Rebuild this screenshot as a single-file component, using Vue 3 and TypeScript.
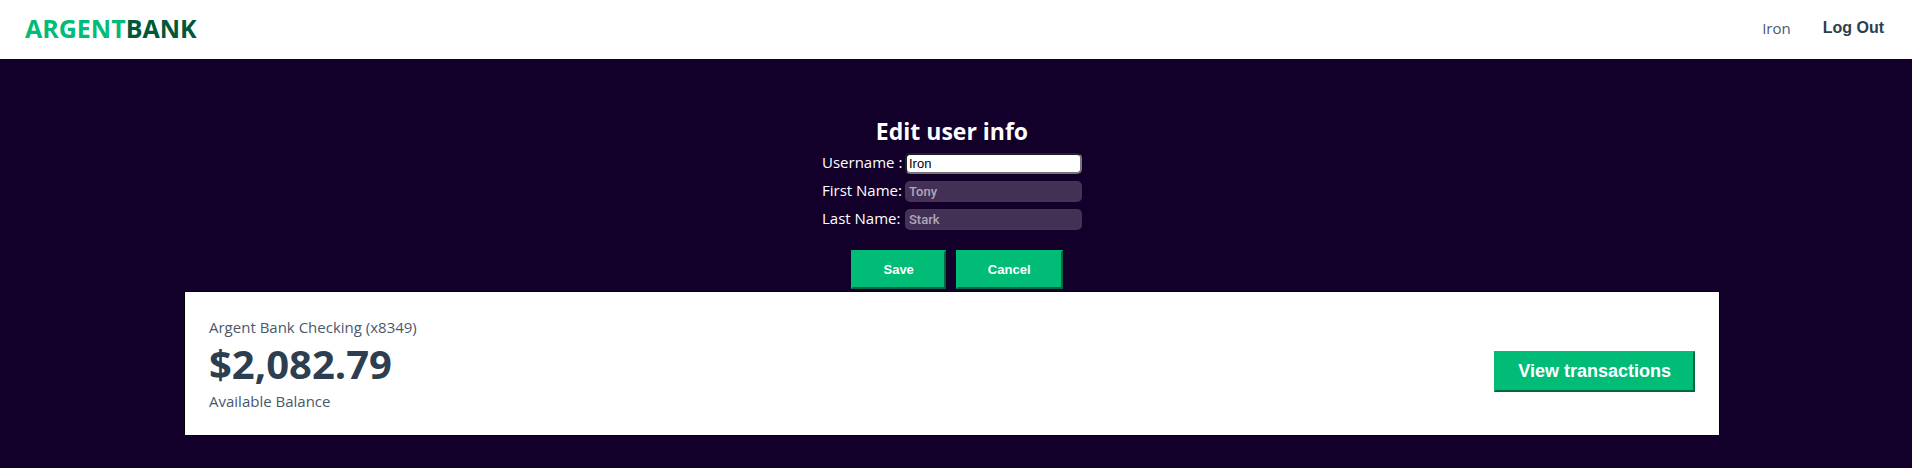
<script setup lang="ts">
import { ref } from 'vue'

const username = ref('Iron')
const firstName = ref('Tony')
const lastName = ref('Stark')
</script>

<template>
  <div class="page">
    <nav class="nav">
      <a class="logo" href="#"><span class="logo-light">ARGENT</span><span class="logo-dark">BANK</span></a>
      <div class="nav-links">
        <a class="nav-user" href="#">{{ username }}</a>
        <a class="nav-logout" href="#">Log Out</a>
      </div>
    </nav>

    <main class="main">
      <form class="edit" @submit.prevent>
        <h1 class="title">Edit user info</h1>
        <div class="field">
          <label for="username">Username :</label>
          <input id="username" v-model="username" type="text" />
        </div>
        <div class="field">
          <label for="first-name">First Name:</label>
          <input id="first-name" v-model="firstName" type="text" disabled />
        </div>
        <div class="field">
          <label for="last-name">Last Name:</label>
          <input id="last-name" v-model="lastName" type="text" disabled />
        </div>
        <div class="actions">
          <button class="button" type="submit">Save</button>
          <button class="button" type="button">Cancel</button>
        </div>
      </form>

      <section class="account">
        <div class="account-text">
          <h2 class="account-name">Argent Bank Checking (x8349)</h2>
          <p class="amount">$2,082.79</p>
          <p class="caption">Available Balance</p>
        </div>
        <button class="button view" type="button">View transactions</button>
      </section>
    </main>
  </div>
</template>

<style>
body {
  margin: 0;
  background: #12002b;
}
</style>

<style scoped>
.page {
  min-height: 100vh;
  font-family: 'Open Sans', 'Noto Sans', sans-serif;
  font-size: 15px;
  color: #2c3e50;
  background: #12002b;
}

.nav {
  display: flex;
  align-items: center;
  justify-content: space-between;
  box-sizing: border-box;
  height: 59px;
  padding: 0 28px 3px 25px;
  background: #fff;
}

.nav a {
  text-decoration: none;
}

.logo {
  font-size: 25px;
  font-weight: 700;
  line-height: 32px;
}

.logo-light {
  color: #00bc77;
}

.logo-dark {
  color: #00583a;
}

.nav-links {
  display: flex;
  align-items: center;
  gap: 32px;
  color: #2c3e50;
}

.nav a.nav-user {
  color: #4a596a;
}

.nav a.nav-logout {
  font-family: 'Liberation Sans', Arial, sans-serif;
  font-size: 16px;
  font-weight: 700;
  color: inherit;
}

.main {
  padding: 56px 192px 32px 184px;
}

.edit {
  display: flex;
  flex-direction: column;
  align-items: center;
}

.title {
  margin: 0 0 2px;
  font-size: 23px;
  font-weight: 700;
  line-height: 32px;
  color: #fff;
}

.field {
  display: flex;
  align-items: center;
  gap: 3px;
  height: 28px;
  color: #fff;
}

.field label {
  width: 80px;
  padding-bottom: 2px;
  white-space: nowrap;
}

.field input {
  box-sizing: border-box;
  width: 177px;
  height: 21px;
  padding: 1px 2px;
  border: 2px inset #767676;
  border-radius: 5px;
  font-family: 'Liberation Sans', Arial, sans-serif;
  font-size: 13px;
  color: #000;
  background: #fff;
}

.field input:disabled {
  border-color: #453357;
  border-style: solid;
  font-family: Roboto, sans-serif;
  font-weight: 500;
  color: #b1a6bb;
  background: #433054;
}

.actions {
  display: flex;
  gap: 10px;
  margin-top: 17px;
  margin-left: 10px;
}

.button {
  padding: 10px 30px;
  border: 2px outset #00bc77;
  font-family: 'Liberation Sans', Arial, sans-serif;
  font-size: 13px;
  font-weight: 700;
  line-height: 15px;
  color: #fff;
  background: #00bc77;
}

.account {
  display: flex;
  align-items: center;
  justify-content: space-between;
  margin-top: 2px;
  padding: 23px 24px 22px;
  border: 1px solid #000;
  background: #fff;
}

.account-name,
.caption {
  margin: 0;
  font-size: 15px;
  font-weight: 400;
  line-height: 24px;
  color: #4a596a;
}

.amount {
  margin: 0;
  font-size: 40px;
  font-weight: 700;
  line-height: 50px;
}

.view {
  margin-top: 14px;
  padding: 8px 22px;
  font-size: 18px;
  line-height: 21px;
}
</style>
